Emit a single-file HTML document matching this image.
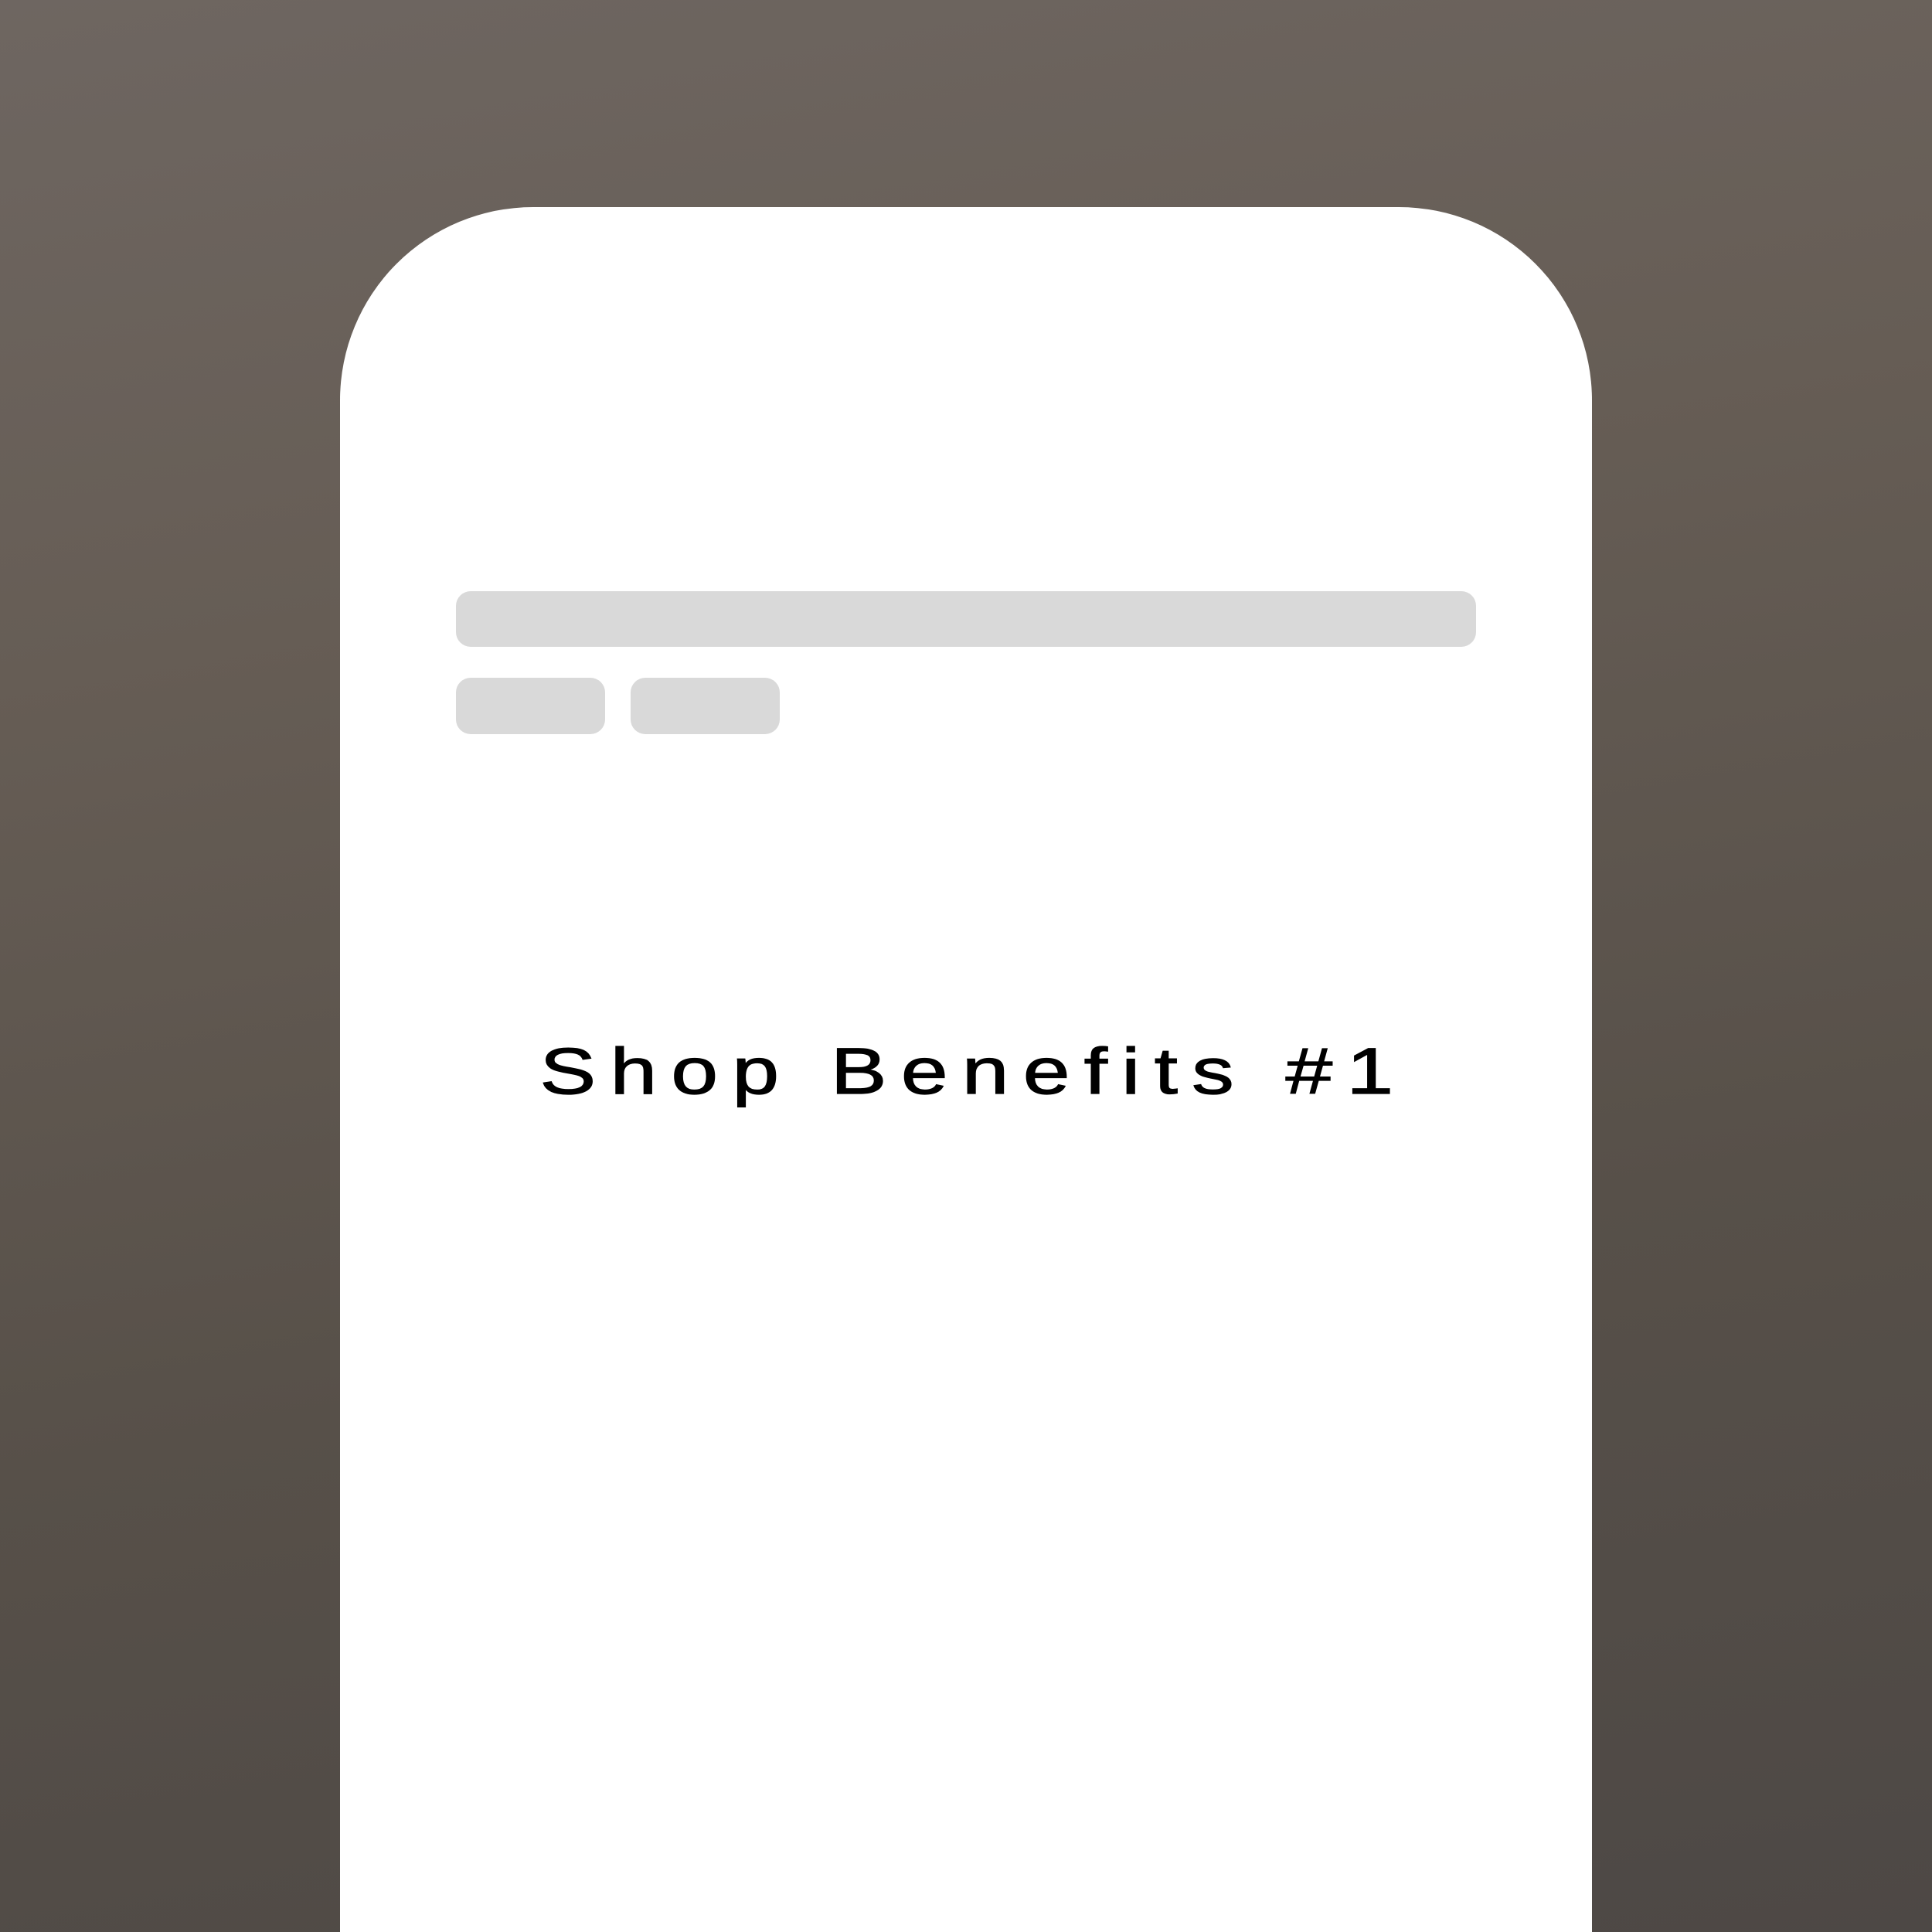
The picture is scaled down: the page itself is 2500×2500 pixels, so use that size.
<!DOCTYPE html>
<html><head><style>
html,body{margin:0;padding:0;width:2500px;height:2500px;overflow:hidden;background:#4d4845}
body{position:relative}
.bg{position:absolute;left:0;top:0;width:2500px;height:2500px;background:linear-gradient(170deg,#6e6661 0%,#665d55 30%,#575049 65%,#4d4845 100%)}
.card{position:absolute;left:440px;top:268px;width:1620px;height:2232px;background:#fff;border-radius:250px 250px 0 0}
.bar{position:absolute;background:#d9d9d9;border-radius:19px}
.t{position:absolute;left:12px;width:2500px;top:1336px;text-align:center;font-family:"Liberation Sans",sans-serif;font-weight:normal;-webkit-text-stroke:1.2px #000;font-size:84px;letter-spacing:14px;color:#000;line-height:100px;transform:scaleX(1.3);transform-origin:1257px 0}
</style></head><body>
<div class="bg"></div>
<div class="card"></div>
<div class="bar" style="left:590px;top:765px;width:1320px;height:72px"></div>
<div class="bar" style="left:590px;top:877px;width:193px;height:73px"></div>
<div class="bar" style="left:816px;top:877px;width:193px;height:73px"></div>
<div class="t">Shop Benefits #1</div>
</body></html>
